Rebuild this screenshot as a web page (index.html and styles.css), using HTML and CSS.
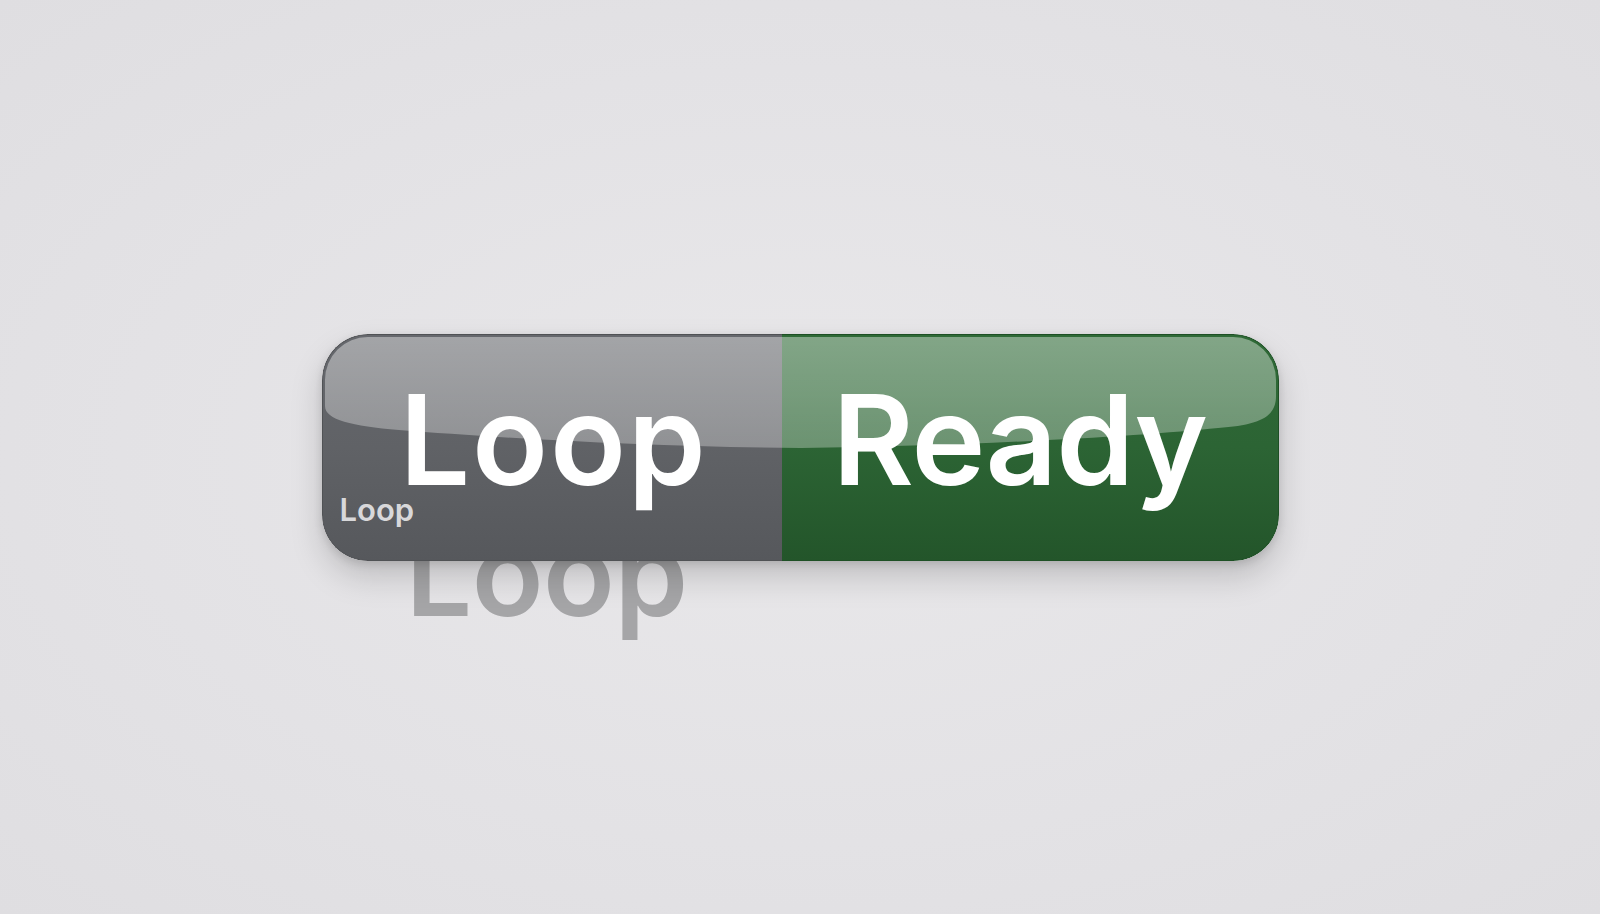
FILE: index.html
```html
<!DOCTYPE html>
<html lang="en">
<head>
<meta charset="utf-8">
<title>Loop Ready</title>
<link rel="stylesheet" href="styles.css">
</head>
<body>
<main class="stage">
  <div class="pill-wrap">
    <div class="ghost">Loop</div>
    <div class="pill">
      <div class="half half-loop">
        <span class="big big-loop">Loop</span>
        <span class="small-label">Loop</span>
      </div>
      <div class="half half-ready">
        <span class="big big-ready">Ready</span>
      </div>
      <svg class="gloss" viewBox="0 0 957 227" preserveAspectRatio="none" aria-hidden="true">
        <defs>
          <linearGradient id="g" x1="0" y1="0" x2="0" y2="1">
            <stop offset="0" stop-color="#ffffff" stop-opacity="0.40"/>
            <stop offset="0.7" stop-color="#ffffff" stop-opacity="0.33"/>
            <stop offset="1" stop-color="#ffffff" stop-opacity="0.30"/>
          </linearGradient>
        </defs>
        <path d="M 3 46 A 43 43 0 0 1 46 3 L 911 3 A 43 43 0 0 1 954 46 L 954 62 C 954 84 936 91 896 94 C 820 102 650 112 479 114 C 330 113 180 104 77 96 C 30 92 3 86 3 72 Z" fill="url(#g)"/>
      </svg>
    </div>
  </div>
</main>
</body>
</html>
```

FILE: styles.css
```css
html, body {
  margin: 0;
  padding: 0;
  height: 100%;
}
body {
  background: radial-gradient(ellipse at 50% 50%, #e9e8ea 0%, #e3e2e5 60%, #dfdee1 100%);
  font-family: Inter, "Open Sans", "Liberation Sans", sans-serif;
  overflow: hidden;
}
.stage {
  display: flex;
  justify-content: center;
  padding-top: 334px;
}
.pill-wrap {
  position: relative;
  width: 957px;
}
.ghost {
  position: absolute;
  left: 84px;
  top: 180px;
  font-size: 118px;
  font-weight: 600;
  line-height: 1;
  color: #a5a5a7;
  letter-spacing: -0.5px;
  filter: blur(0.4px);
  z-index: 0;
}
.pill {
  position: relative;
  z-index: 1;
  display: flex;
  height: 227px;
  border-radius: 46px;
  overflow: hidden;
  box-sizing: border-box;
  box-shadow: 0 16px 32px rgba(0,0,0,0.17), 0 3px 8px rgba(0,0,0,0.12);
}
.half {
  position: relative;
  display: flex;
  align-items: flex-start;
  box-sizing: border-box;
  padding-top: 42px;
}
.half-loop {
  width: 460px;
  padding-left: 77px;
  background: linear-gradient(180deg, #66686d 0%, #606266 50%, #56585c 100%);
  border: 1.5px solid #505255;
  border-right: none;
  border-radius: 46px 0 0 46px;
}
.half-ready {
  flex: 1;
  padding-left: 51px;
  background: linear-gradient(180deg, #2f6a37 0%, #2c6434 50%, #23552a 100%);
  border: 1.5px solid #1e5025;
  border-left: none;
  border-radius: 0 46px 46px 0;
}
.big {
  font-size: 125px;
  font-weight: 600;
  line-height: 1;
  color: #ffffff;
  position: relative;
  z-index: 3;
}
.big-loop {
  letter-spacing: 1.8px;
}
.big-ready {
  letter-spacing: -1px;
}
.small-label {
  position: absolute;
  left: 17px;
  top: 159px;
  font-size: 31px;
  font-weight: 600;
  line-height: 1;
  color: #d8d8da;
  z-index: 3;
}
.gloss {
  position: absolute;
  left: 0;
  top: 0;
  width: 100%;
  height: 100%;
  z-index: 2;
  pointer-events: none;
}
```
